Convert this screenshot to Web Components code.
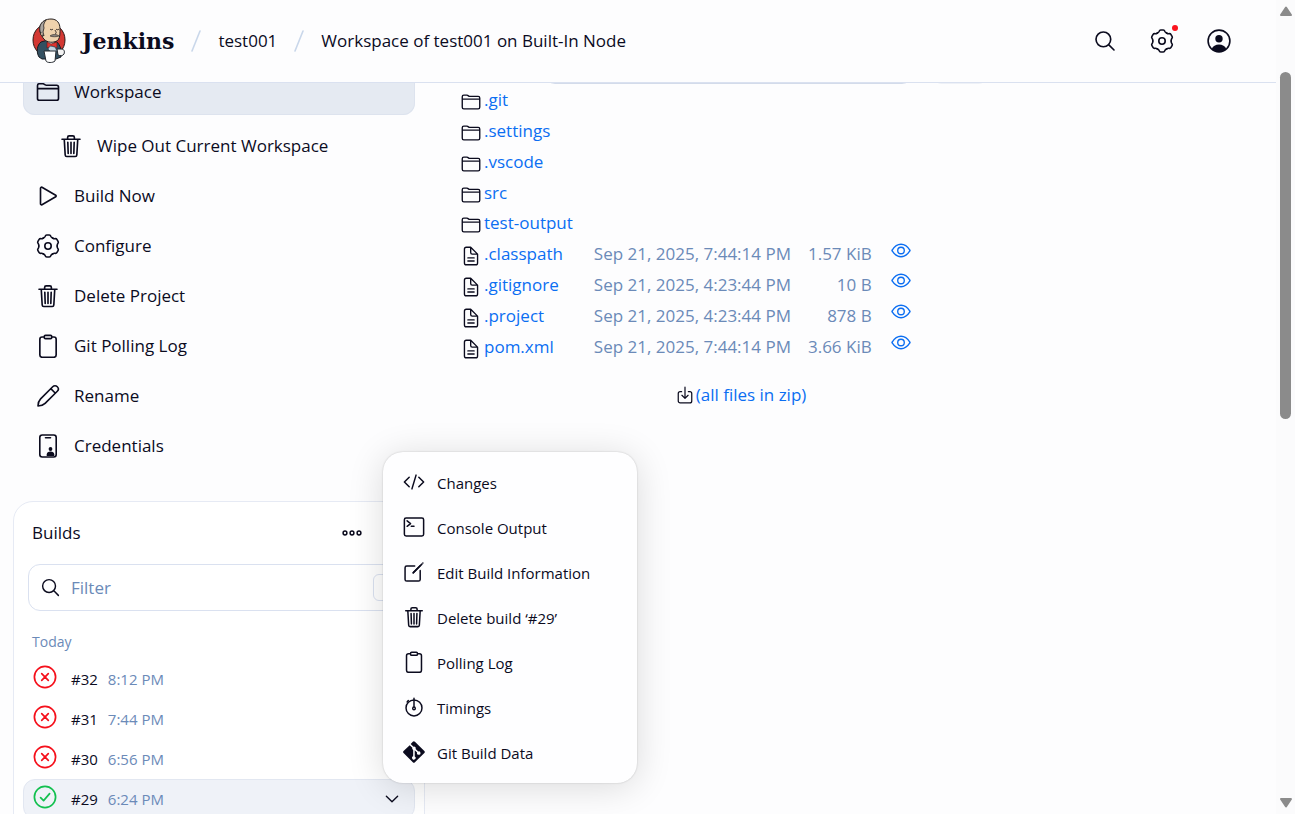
<!DOCTYPE html>
<html lang="en">
<head>
<meta charset="utf-8">
<meta name="viewport" content="width=device-width, initial-scale=1">
<title>Workspace of test001 on Built-In Node - Jenkins</title>
<style>
:root{--text:#0b0b1e;--muted:#6b8ab8;--link:#0b6ef2;--line:#dae1f0;--bg:#fdfdfe;--active:#e5eaf2;--hover:#eff2f8}
html,body{margin:0;height:100%}
body{font:17px/24px "Open Sans","Noto Sans",sans-serif;color:var(--text);background:var(--bg);overflow:hidden}
</style>
</head>
<body>
<app-shell>
  <app-header slot="header"></app-header>
  <side-panel slot="side">
    <side-item icon="folder" active>Workspace</side-item>
    <side-item icon="trash" sub>Wipe Out Current Workspace</side-item>
    <side-item icon="play">Build Now</side-item>
    <side-item icon="gear">Configure</side-item>
    <side-item icon="trash">Delete Project</side-item>
    <side-item icon="clipboard">Git Polling Log</side-item>
    <side-item icon="pencil">Rename</side-item>
    <side-item icon="credentials">Credentials</side-item>
    <builds-card slot="card">
      <build-row status="failed" number="#32" time="8:12 PM"></build-row>
      <build-row status="failed" number="#31" time="7:44 PM"></build-row>
      <build-row status="failed" number="#30" time="6:56 PM"></build-row>
      <build-row status="success" number="#29" time="6:24 PM" open>
        <context-menu>
          <menu-item icon="code">Changes</menu-item>
          <menu-item icon="terminal">Console Output</menu-item>
          <menu-item icon="edit">Edit Build Information</menu-item>
          <menu-item icon="trash">Delete build ‘#29’</menu-item>
          <menu-item icon="clipboard">Polling Log</menu-item>
          <menu-item icon="timer">Timings</menu-item>
          <menu-item icon="git">Git Build Data</menu-item>
        </context-menu>
      </build-row>
    </builds-card>
  </side-panel>
  <workspace-files slot="content"></workspace-files>
  <scroll-rail slot="rail"></scroll-rail>
</app-shell>

<script>
const S = 'fill="none" stroke="currentColor" stroke-width="35" stroke-linecap="round" stroke-linejoin="round"';
const T = 'fill="none" stroke="currentColor" stroke-width="1.6" stroke-linecap="round" stroke-linejoin="round"';
const big = d => ['0 0 512 512', `<path ${S} d="${d}"/>`];
const lobe = 'M-4.6 -7.95Q-3.3 -8.6 -2.9 -9.5Q-2.4 -11 -1.3 -11H1.3Q2.4 -11 2.9 -9.5Q3.3 -8.6 4.6 -7.95';
const ICONS = {
  folder: big('M440 432H72a40 40 0 01-40-40V120a40 40 0 0140-40h75.89a40 40 0 0122.19 6.72l27.84 18.56a40 40 0 0022.19 6.72H440a40 40 0 0140 40v240a40 40 0 01-40 40zM32 184h448'),
  trash: big('M112 112l20 336c1 18 14 32 32 32h184c18 0 31-14 32-32l20-336M64 112h384M184 112V72a32 32 0 0132-32h80a32 32 0 0132 32v40M256 176v240M188 176l8 240M324 176l-8 240'),
  play: big('M96 91v330c0 17 17 28 31 20l293-168c12-7 12-27 0-34L127 71c-14-8-31 3-31 20z'),
  gear: ['-12 -12 24 24', [0,60,120,180,240,300].map(a => `<path ${T} transform="rotate(${a})" d="${lobe}"/>`).join('') + `<circle ${T} r="3.2"/>`],
  clipboard: big('M336 64h46a48 48 0 0148 48v336a48 48 0 01-48 48H130a48 48 0 01-48-48V112a48 48 0 0148-48h46M202 28h108a26 26 0 0126 26v20a26 26 0 01-26 26H202a26 26 0 01-26-26V54a26 26 0 0126-26z'),
  pencil: ['0 0 24 24', `<path ${T} d="M2 22C2 18.600 2.600 17 4.600 14.900L16.700 2.700a3.250 3.250 0 014.600 4.600L9.100 19.400C7 21.400 5.400 22 2 22zM14.800 4.600l4.600 4.600"/>`],
  credentials: ['0 0 24 24', `<rect ${T} x="3.800" y="1" width="16.400" height="22" rx="2.500"/><path ${T} d="M9.500 3.800h5"/><circle cx="14.500" cy="15" r="1.900" fill="currentColor"/><path d="M10.700 22v-1.600c0-2 1.600-3 3.800-3s3.800 1 3.800 3V22z" fill="currentColor"/>`],
  search: big('M221 64a157 157 0 10157 157A157 157 0 00221 64zM338 338l110 110'),
  dots: ['0 0 24 24', [5,12,19].map(x => `<circle cx="${x}" cy="12" r="1.900" fill="none" stroke="currentColor" stroke-width="1.500"/>`).join('')],
  code: big('M144 368L32 256l112-112M368 368l112-112-112-112M304 96l-96 320'),
  terminal: big('M72 48h368a40 40 0 0140 40v336a40 40 0 01-40 40H72a40 40 0 01-40-40V88a40 40 0 0140-40zM96 112l80 64-80 64M192 240h64'),
  edit: ['0 0 512 512', `<path ${S} d="M400 224v204a40 40 0 01-40 40H88a40 40 0 01-40-40V156a40 40 0 0140-40h184M440 72L236 276"/><path ${S} stroke-width="46" d="M404 106L240 270M462 48l1-1"/>`],
  timer: ['0 0 24 24', `<circle ${T} cx="12" cy="13" r="8.700"/><path ${T} d="M12 2.500v9M4.500 6.500L5.800 5"/><circle ${T} cx="12" cy="13.500" r="1.400"/>`],
  git: ['0 0 24 24', '<path fill="currentColor" d="M10.700.9 8.400 3.200l3 3a1.900 1.900 0 012.400 2.400l2.800 2.800a1.900 1.900 0 11-1.200 1.200l-2.600-2.600v6.800a1.900 1.900 0 11-1.700-.1v-7a1.900 1.900 0 01-.9-2.300L7.300 4.500.6 11a1.600 1.600 0 000 2.200l10.100 10a1.600 1.600 0 002.300 0l10.300-10a1.600 1.600 0 000-2.200L13 .9a1.600 1.600 0 00-2.300 0z"/>'],
  eye: ['0 64 512 384', `<path ${S} d="M256 96C170 96 90 150 30 244a20 20 0 000 24c60 94 140 148 226 148s166-54 226-148a20 20 0 000-24C422 150 342 96 256 96z"/><circle ${S} cx="256" cy="256" r="84"/>`],
  file: big('M424 208v224a48 48 0 01-48 48H136a48 48 0 01-48-48V80a48 48 0 0148-48h112zM248 32v136a40 40 0 0040 40h136M176 304h160M176 384h160'),
  download: big('M352 160h40a56 56 0 0156 56v208a56 56 0 01-56 56H120a56 56 0 01-56-56V216a56 56 0 0156-56h40M168 264l88 88 88-88M256 32v304'),
  user: ['0 0 24 24', `<circle ${T} cx="12" cy="12" r="10.900"/><circle cx="12" cy="9.800" r="3.700" fill="currentColor"/><path d="M4.700 20c1-3 4-4.500 7.300-4.500s6.300 1.500 7.300 4.500A10.500 10.500 0 0112 23a10.500 10.500 0 01-7.300-3z" fill="currentColor"/>`],
  chevron: big('M112 184l144 144 144-144'),
  failed: ['0 0 24 24', '<g fill="none" stroke="#f5101b" stroke-width="1.700" stroke-linecap="round"><circle cx="12" cy="12" r="10.600"/><path d="M8.700 8.700l6.600 6.600M15.300 8.700l-6.600 6.600"/></g>'],
  success: ['0 0 24 24', '<g fill="none" stroke="#12c04f" stroke-width="1.700" stroke-linecap="round" stroke-linejoin="round"><circle cx="12" cy="12" r="10.600"/><path d="M7.600 12.600l3 3 6-7"/></g>']
};

function define(name, css, html, ready) {
  customElements.define(name, class extends HTMLElement {
    connectedCallback() {
      if (this.shadowRoot) return;
      const root = this.attachShadow({mode: 'open'});
      const body = typeof html === 'function' ? html(this) : html;
      root.innerHTML = `<style>:host,*{box-sizing:border-box}a{color:inherit;text-decoration:none}button{font:inherit;color:inherit;background:none;border:0;padding:0;cursor:pointer}${css}</style>${body}`;
      if (ready) ready(root, this);
    }
  });
}

define('ui-icon',
  ':host{display:inline-block;width:24px;height:24px;flex:none}svg{display:block;width:100%;height:100%}',
  el => { const [box, inner] = ICONS[el.getAttribute('name')]; return `<svg viewBox="${box}" aria-hidden="true">${inner}</svg>`; });

define('app-shell', `
  :host{display:grid;grid-template-columns:minmax(0,1fr) 19px;grid-template-rows:auto minmax(0,1fr);height:100vh}
  main{display:grid;grid-template-columns:425px minmax(0,1fr);column-gap:36px;overflow:hidden;align-items:start}
  .rail{grid-column:2;grid-row:1 / span 2;display:grid}`,
  `<slot name="header"></slot><main><slot name="side"></slot><slot name="content"></slot></main><div class="rail"><slot name="rail"></slot></div>`);

define('jenkins-logo', ':host{display:block;width:34px;height:46px}svg{display:block;width:100%;height:100%}', `
  <svg viewBox="0 0 34 46" role="img" aria-label="Jenkins">
    <ellipse cx="17" cy="22" rx="16" ry="16.500" fill="#d33833" stroke="#2a1a18"/>
    <path d="M7 39C4 34 5 27 9 24l7-2 9 2c3 3 5 8 4 15l-5 2H10z" fill="#335061" stroke="#171b22"/>
    <path d="M15 23l7 1-3 12z" fill="#f4f4f4"/>
    <path d="M8 8C10 3 14 1 19 1c6 0 9 4 9 10 0 7 0 12-6 13-5 1-10-1-12-6L8 14z" fill="#efd2ad" stroke="#241f20"/>
    <path d="M8 13C7 8 9 4 14 2c-2 3-3 5-2 8l-1 4 1 4-3-2z" fill="#aaa5a0" stroke="#241f20" stroke-width=".8"/>
    <path d="M9 14c-1 2 0 4 2 4" fill="#efd2ad" stroke="#241f20"/>
    <path d="M18 11c1 1 2 1 3 0M24 11c1 1 2 1 3 0M23 12c1 2 2 3 0 4" fill="none" stroke="#2c2523" stroke-width="1"/>
    <path d="M18 18c2-2 7-2 9 0-2 1-7 1-9 0z" fill="#8a8580" stroke="#2c2523" stroke-width=".6"/>
    <path d="M15 24l4 2 6-2v6l-5-2-5 2z" fill="#e0332e" stroke="#651d1d" stroke-width=".7"/>
    <path d="M18 28l5 1 2 4-5 2-4-4z" fill="#c4d3df" stroke="#335061" stroke-width=".7"/>
    <path d="M12 33h12l-1 10c-2 2-8 2-9 0z" fill="#fff" stroke="#252a31"/>
    <path d="M25 31h4c3 0 4 2 3 5-1 2-4 2-6 1z" fill="#f3f3f3" stroke="#252a31"/>
  </svg>`);

define('app-header', `
  :host{display:flex;align-items:center;justify-content:space-between;height:83px;padding:0 45px 0 32px;border-bottom:1px solid var(--line)}
  nav,.brand,.actions{display:flex;align-items:center}
  nav{white-space:nowrap}
  .brand{gap:16px}
  .brand span{font:bold 22px/28px "DejaVu Serif","Liberation Serif",serif}
  .sep{width:10px;height:24px;margin:0 17px;color:#c9d7ea}
  .actions{gap:33px}
  button{position:relative;display:block;height:24px}
  .badge{position:absolute;right:-4px;top:-4px;width:6px;height:6px;border-radius:50%;background:#fa141e}`, `
  <nav aria-label="Breadcrumbs">
    <a class="brand" href="#"><jenkins-logo></jenkins-logo><span>Jenkins</span></a>
    <svg class="sep" viewBox="0 0 10 24"><path d="M9 2L1 22" stroke="currentColor" stroke-width="1.600" stroke-linecap="round"/></svg>
    <a href="#">test001</a>
    <svg class="sep" viewBox="0 0 10 24"><path d="M9 2L1 22" stroke="currentColor" stroke-width="1.600" stroke-linecap="round"/></svg>
    <a href="#">Workspace of test001 on Built-In Node</a>
  </nav>
  <div class="actions">
    <button aria-label="Search"><ui-icon name="search"></ui-icon></button>
    <button aria-label="Manage Jenkins"><ui-icon name="gear"></ui-icon><i class="badge"></i></button>
    <button aria-label="User"><ui-icon name="user"></ui-icon></button>
  </div>`);

define('side-panel', `
  :host{display:block;padding-left:13px;position:relative;z-index:1}
  nav{display:flex;flex-direction:column;gap:4px;margin:-14px 10px 0;padding-bottom:32px}`,
  '<nav aria-label="Project"><slot></slot></nav><slot name="card"></slot>');

define('side-item', `
  :host{display:block}
  :host([sub]){margin:4px 0 0 23px}
  a{display:flex;align-items:center;gap:14px;height:46px;padding:0 12px 0 13px;border-radius:12px}
  :host([active]) a{background:var(--active);box-shadow:inset 0 0 0 1px #dde3ee}`,
  el => `<a href="#"><ui-icon name="${el.getAttribute('icon')}"></ui-icon><slot></slot></a>`);

define('builds-card', `
  :host{display:block;border:1px solid #e6eaf4;border-radius:20px;background:#fff;padding:0 9px 40px}
  header{display:flex;align-items:center;justify-content:space-between;padding:19px 51px 19px 9px}
  h2{margin:0;font:inherit}
  button{display:block;height:24px}
  label{display:flex;align-items:center;gap:10px;height:47px;margin:0 5px;padding:0 9px 0 11px;border:1px solid var(--line);border-radius:12px}
  label ui-icon{width:21px;height:21px}
  input{flex:1;min-width:0;border:0;outline:0;background:none;font:inherit;color:var(--text);padding:0}
  input::placeholder{color:var(--muted);opacity:1}
  kbd{width:27px;height:27px;border:1px solid var(--line);border-radius:6px}
  h3{margin:21px 0 7px 9px;font:14px/20px "Open Sans","Noto Sans",sans-serif;color:var(--muted)}`, `
  <header><h2>Builds</h2><button aria-label="More actions"><ui-icon name="dots"></ui-icon></button></header>
  <label><ui-icon name="search"></ui-icon><input type="search" placeholder="Filter" aria-label="Filter builds"><kbd></kbd></label>
  <h3>Today</h3><slot></slot>`);

define('build-row', `
  :host{display:flex;align-items:center;position:relative;height:40px;padding:0 12px 0 9px;font-size:15px;line-height:20px;border:1px solid transparent;border-radius:12px}
  :host([open]){background:var(--hover);border-color:#e2e7f1}
  a{display:flex;align-items:center;flex:1;gap:10px}
  ui-icon{margin-bottom:4px}
  span{color:var(--text);margin-left:4px}
  time{color:var(--muted)}
  button ui-icon{display:block;width:20px;height:20px;margin:0}`,
  el => `<a href="#"><ui-icon name="${el.getAttribute('status')}"></ui-icon><span>${el.getAttribute('number')}</span><time>${el.getAttribute('time')}</time></a>${el.hasAttribute('open') ? '<button aria-label="Build menu" aria-expanded="true"><ui-icon name="chevron"></ui-icon></button>' : ''}<slot></slot>`);

define('context-menu', `
  :host{position:absolute;left:359px;bottom:calc(100% - 3px);width:254px;padding:8px;border-radius:20px;background:#fefeff;box-shadow:0 0 2px #0003,0 4px 36px #00000024}`,
  '<div role="menu"><slot></slot></div>');

define('menu-item', `
  :host{display:block}
  a{display:flex;align-items:center;gap:12px;height:45px;padding:0 12px;white-space:nowrap}
  ui-icon{width:22px;height:22px;margin-bottom:2px}`,
  el => `<a role="menuitem" href="#"><ui-icon name="${el.getAttribute('icon')}"></ui-icon><slot></slot></a>`);

const FILES = [['.git'],['.settings'],['.vscode'],['src'],['test-output'],
  ['.classpath','Sep 21, 2025, 7:44:14 PM','1.57 KiB'],
  ['.gitignore','Sep 21, 2025, 4:23:44 PM','10 B'],
  ['.project','Sep 21, 2025, 4:23:44 PM','878 B'],
  ['pom.xml','Sep 21, 2025, 7:44:14 PM','3.66 KiB']];

define('workspace-files', `
  :host{display:block;max-width:560px;color:var(--muted)}
  form{display:flex;gap:20px;margin:-39px 33px 0 84px}
  form input{flex:1;min-width:0;height:40px;border:1px solid #d3dbea;border-radius:10px;background:#fff}
  form button{width:56px;height:40px;border-radius:10px;border-bottom:1px solid #eef1f7}
  table{border-collapse:collapse;height:277px;margin-top:1px}
  td{padding:0;vertical-align:middle;white-space:nowrap}
  a{color:var(--link)}
  .kind{width:23px;color:var(--text)}
  .kind ui-icon{display:block;width:20px;height:20px;margin-top:4px}
  .date{padding-left:21px}
  .size{padding-left:17px;text-align:right}
  .view{padding-left:19px}
  .view ui-icon{display:block;width:20px;height:15px;margin-bottom:8px}
  .zip{display:flex;justify-content:center;align-items:center;gap:2px;margin-top:21px}
  .zip ui-icon{width:18px;height:18px;color:var(--text)}`,
  `<form><input type="text" aria-label="Path"><button type="button" aria-label="Go"></button></form>
  <table><tbody>${FILES.map(([n, d, s]) => `<tr><td class="kind"><ui-icon name="${d ? 'file' : 'folder'}"></ui-icon></td><td><a href="#">${n}</a></td><td class="date">${d || ''}</td><td class="size">${s || ''}</td><td class="view">${d ? `<a href="#" aria-label="View ${n}"><ui-icon name="eye"></ui-icon></a>` : ''}</td></tr>`).join('')}</tbody></table>
  <div class="zip"><ui-icon name="download"></ui-icon><a href="#">(all files in zip)</a></div>`);

define('scroll-rail', `
  :host{display:flex;flex-direction:column;align-items:center;background:#fbfbfc;padding:5px 0}
  svg{display:block;width:14px;height:12px;flex:none;fill:#8b8b8b;stroke:#8b8b8b;stroke-width:2;stroke-linejoin:round}
  .thumb{width:11px;border-radius:6px;background:#8b8b8b;flex:347}
  .before{flex:55}.after{flex:378}`, `
  <svg viewBox="0 0 14 12"><path d="M7 2.500L12 10H2z"/></svg>
  <div class="before"></div><div class="thumb"></div><div class="after"></div>
  <svg viewBox="0 0 14 12"><path d="M7 9.500L12 2H2z"/></svg>`);
</script>
</body>
</html>
